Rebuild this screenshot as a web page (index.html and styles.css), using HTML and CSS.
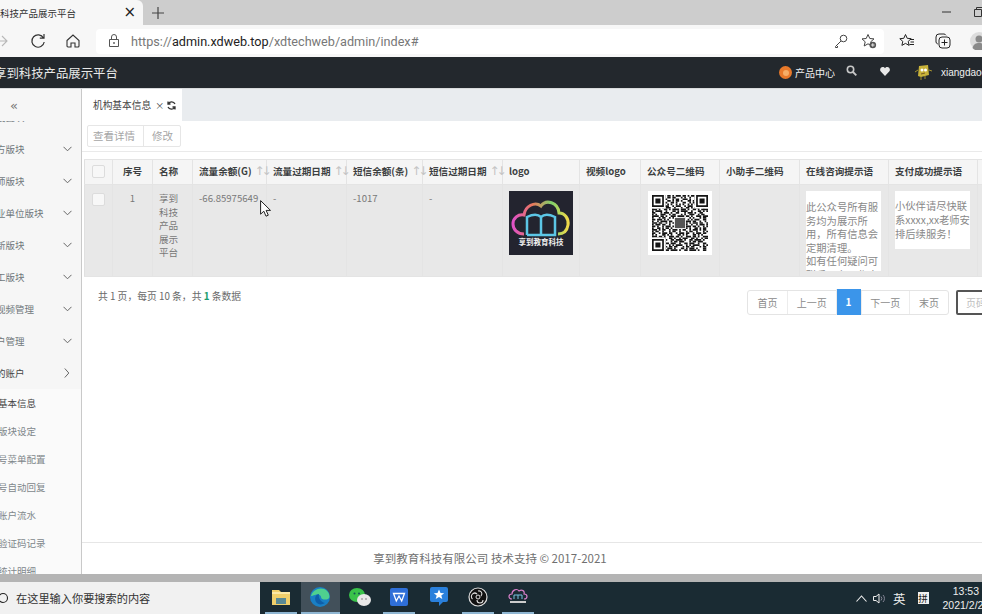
FILE: index.html
```html
<!DOCTYPE html>
<html lang="zh-CN">
<head>
<meta charset="utf-8">
<title>享到科技产品展示平台</title>
<link rel="stylesheet" href="styles.css">
</head>
<body>
<div class="tabbar">
  <div class="browser-tab">
    <span class="browser-tab-title">科技产品展示平台</span>
    <span class="browser-tab-close">×</span>
  </div>
  <svg class="new-tab" width="12" height="12" viewBox="0 0 12 12"><path d="M6 0v12M0 6h12" stroke="#444" stroke-width="1.2"/></svg>
  <div class="win-controls">
    <svg width="10" height="10" viewBox="0 0 10 10"><path d="M0 5h9" stroke="#333"/></svg>
    <svg width="10" height="10" viewBox="0 0 10 10"><path d="M.5 2.5h7v7h-7zM2.5 2.5v-2h7v7h-2" fill="none" stroke="#333"/></svg>
  </div>
</div>

<div class="addrbar">
  <div class="nav-icons">
    <svg width="14" height="14" viewBox="0 0 14 14"><path d="M0 7h11M6 2l5 5-5 5" fill="none" stroke="#b8b8b8" stroke-width="1.1"/></svg>
    <svg width="16" height="16" viewBox="0 0 16 16"><path d="M13.5 5A6.2 6.2 0 1 0 14.2 9M14 1v4.2H9.8" fill="none" stroke="#333" stroke-width="1.2"/></svg>
    <svg width="14" height="14" viewBox="0 0 14 14"><path d="M1 6.500L7 1l6 5.500V12a1 1 0 0 1-1 1H9V9H5v4H2a1 1 0 0 1-1-1z" fill="none" stroke="#333" stroke-width="1.1"/></svg>
  </div>
  <div class="omnibox">
    <svg width="12" height="14" viewBox="0 0 12 14"><path d="M1.500 5.500h9v7h-9zM3.500 5.500V3a2.500 2.500 0 0 1 5 0v2.500" fill="none" stroke="#555"/><circle cx="6" cy="9" r=".9" fill="#555"/></svg>
    <span class="url"><span class="url-dim">https://</span>admin.xdweb.top<span class="url-dim">/xdtechweb/admin/index#</span></span>
    <div class="omni-actions">
      <svg width="14" height="14" viewBox="0 0 14 14"><circle cx="9.500" cy="4.500" r="3.300" fill="none" stroke="#444"/><path d="M7 7L1.500 12.500v1h2V12" fill="none" stroke="#444"/></svg>
      <svg width="16" height="16" viewBox="0 0 16 16"><path d="M7 1.500l1.800 4 4.200.4-3.200 2.800 1 4.200L7 10.800 3.200 13l1-4.200L1 5.900l4.200-.4z" fill="none" stroke="#444"/><circle cx="11.800" cy="12" r="3.300" fill="#555"/><path d="M10 12h3.600M11.800 10.200v3.600" stroke="#fff" stroke-width=".8"/></svg>
    </div>
  </div>
  <div class="browser-actions">
    <svg width="16" height="16" viewBox="0 0 16 16"><path d="M6.500 1.500l1.700 3.800 4 .4-3 2.700.9 4-3.600-2-3.600 2 .9-4-3-2.700 4-.4z" fill="none" stroke="#222"/><path d="M11 6.500h4M11.500 9h3.500M10.500 11.500h4.500" stroke="#222"/></svg>
    <svg width="16" height="16" viewBox="0 0 16 16"><rect x="4" y="4" width="11" height="11" rx="3" fill="none" stroke="#222"/><path d="M2.800 11A2.500 2.500 0 0 1 1 9V4a3 3 0 0 1 3-3h5a2.500 2.500 0 0 1 2 1.300M9.500 6.500v6M6.500 9.500h6" fill="none" stroke="#222"/></svg>
    <svg class="profile" width="18" height="18" viewBox="0 0 18 18"><circle cx="9" cy="9" r="9" fill="#ddd"/><circle cx="9" cy="7" r="3.500" fill="#8a8a8a"/><path d="M2.500 16c1-4 3.500-5 6.500-5s5.500 1 6.500 5a9 9 0 0 1-13 0z" fill="#8a8a8a"/></svg>
  </div>
</div>

<div class="app">
  <header class="topbar">
    <div class="brand">享到科技产品展示平台</div>
    <div class="top-right">
      <span class="product-dot"><span class="product-dot-core"></span></span>
      <span class="product-link">产品中心</span>
      <svg class="top-search" width="11" height="11" viewBox="0 0 11 11"><circle cx="4.500" cy="4.500" r="3.200" fill="none" stroke="#c8c8c8" stroke-width="1.600"/><path d="M7 7l3.300 3.300" stroke="#c8c8c8" stroke-width="1.800"/></svg>
      <svg class="top-heart" width="10" height="9" viewBox="0 0 10 9"><path d="M5 9L.8 4.600C-.8 2.500.6 0 2.700 0 3.700 0 4.500.5 5 1.300 5.500.5 6.300 0 7.300 0c2.100 0 3.500 2.500 1.900 4.600z" fill="#e8e8e8"/></svg>
      <svg class="top-avatar" width="18" height="16" viewBox="0 0 18 16"><path d="M5 1l9-1 1 10-8 2-3-1z" fill="#c9b33a"/><circle cx="8" cy="5" r="1.500" fill="#fff"/><circle cx="11.500" cy="5" r="1.500" fill="#fff"/><path d="M7 9l4-1" stroke="#7a5b22"/><path d="M4 5L1 7M15 5l3 1M7 12v3M11 11v3" stroke="#a5922f"/></svg>
      <span class="username">xiangdaoedu</span>
    </div>
  </header>

  <div class="main">
    <aside class="sidebar">
      <div class="collapse">«</div>
      <nav class="menu">
        <div class="menu-item"><span class="menu-label">系统设置块</span><svg class="chev" width="9" height="6" viewBox="0 0 9 6"><path d="M.5.800l4 4 4-4" fill="none" stroke="#666"/></svg></div>
        <div class="menu-item"><span class="menu-label">校官方版块</span><svg class="chev" width="9" height="6" viewBox="0 0 9 6"><path d="M.5.800l4 4 4-4" fill="none" stroke="#666"/></svg></div>
        <div class="menu-item"><span class="menu-label">名教师版块</span><svg class="chev" width="9" height="6" viewBox="0 0 9 6"><path d="M.5.800l4 4 4-4" fill="none" stroke="#666"/></svg></div>
        <div class="menu-item"><span class="menu-label">企事业单位版块</span><svg class="chev" width="9" height="6" viewBox="0 0 9 6"><path d="M.5.800l4 4 4-4" fill="none" stroke="#666"/></svg></div>
        <div class="menu-item"><span class="menu-label">学校新版块</span><svg class="chev" width="9" height="6" viewBox="0 0 9 6"><path d="M.5.800l4 4 4-4" fill="none" stroke="#666"/></svg></div>
        <div class="menu-item"><span class="menu-label">教职工版块</span><svg class="chev" width="9" height="6" viewBox="0 0 9 6"><path d="M.5.800l4 4 4-4" fill="none" stroke="#666"/></svg></div>
        <div class="menu-item"><span class="menu-label">课程视频管理</span><svg class="chev" width="9" height="6" viewBox="0 0 9 6"><path d="M.5.800l4 4 4-4" fill="none" stroke="#666"/></svg></div>
        <div class="menu-item"><span class="menu-label">新用户管理</span><svg class="chev" width="9" height="6" viewBox="0 0 9 6"><path d="M.5.800l4 4 4-4" fill="none" stroke="#666"/></svg></div>
        <div class="menu-item menu-open"><span class="menu-label">机构的账户</span><svg class="chev" width="6" height="10" viewBox="0 0 6 10"><path d="M.8.500l4 4.500-4 4.500" fill="none" stroke="#666"/></svg></div>
        <div class="sub-item sub-active">机构基本信息</div>
        <div class="sub-item">机构版块设定</div>
        <div class="sub-item">公众号菜单配置</div>
        <div class="sub-item">公众号自动回复</div>
        <div class="sub-item">机构账户流水</div>
        <div class="sub-item">短信验证码记录</div>
        <div class="sub-item">机构统计明细</div>
      </nav>
    </aside>

    <section class="content">
      <div class="tabs">
        <div class="tab">机构基本信息<span class="tab-x">×</span>
          <svg width="9" height="9" viewBox="0 0 9 9"><path d="M8 3A3.800 3.800 0 0 0 1.300 2.600M1 6a3.800 3.800 0 0 0 6.700.4M1 .5v2.500h2.500M8 8.500V6H5.500" fill="none" stroke="#333" stroke-width="1.300"/></svg>
        </div>
      </div>

      <div class="toolbar">
        <div class="btn-group">
          <span class="btn">查看详情</span>
          <span class="btn">修改</span>
        </div>
      </div>

      <div class="table-wrap">
        <table class="data">
          <colgroup>
            <col class="c-check"><col class="c-idx"><col class="c-name"><col class="c-a"><col class="c-b"><col class="c-c"><col class="c-d"><col class="c-logo"><col class="c-vlogo"><col class="c-qr"><col class="c-help"><col class="c-msg"><col class="c-msg"><col class="c-rest">
          </colgroup>
          <thead>
            <tr>
              <th class="center"><span class="check"></span></th>
              <th class="center">序号</th>
              <th>名称</th>
              <th>流量余额(G)<span class="sort">↑↓</span></th>
              <th>流量过期日期<span class="sort">↑↓</span></th>
              <th>短信余额(条)<span class="sort">↑↓</span></th>
              <th>短信过期日期<span class="sort">↑↓</span></th>
              <th>logo</th>
              <th>视频logo</th>
              <th>公众号二维码</th>
              <th>小助手二维码</th>
              <th>在线咨询提示语</th>
              <th>支付成功提示语</th>
              <th></th>
            </tr>
          </thead>
          <tbody>
            <tr>
              <td class="center"><span class="check"></span></td>
              <td class="center">1</td>
              <td class="wrapcell">享到科技产品展示平台</td>
              <td>-66.85975649</td>
              <td>-</td>
              <td>-1017</td>
              <td>-</td>
              <td>
                <div class="logo-box">
                  <svg width="64" height="64" viewBox="0 0 64 64">
                    <defs>
                      <linearGradient id="cloud" x1="0" x2="1" y1="0" y2="0">
                        <stop offset="0" stop-color="#e052c8"/>
                        <stop offset=".35" stop-color="#e8785c"/>
                        <stop offset=".7" stop-color="#7fd06a"/>
                        <stop offset="1" stop-color="#f2d94a"/>
                      </linearGradient>
                    </defs>
                    <rect width="64" height="64" fill="#23242f"/>
                    <path d="M15 43C8 43 4 38 4 33 4 27 9 23 15 24 16 15 26 10 32 15 37 8 49 11 50 22 56 22 60 28 59 34 58 40 54 43 49 43" fill="none" stroke="url(#cloud)" stroke-width="3"/>
                    <path d="M18 44V26C24 23 29 23 32 26 35 23 40 23 46 26V44H18M32 26V44" fill="none" stroke="#5cc6e6" stroke-width="2.500"/>
                    <text x="32" y="54" class="logo-text">享到教育科技</text>
                  </svg>
                </div>
              </td>
              <td></td>
              <td>
                <div class="qr-box">
                  <svg width="56" height="56" viewBox="0 0 33 33">
                    <g fill="none" stroke="#151515" stroke-width="1">
                      <path d="M0 .5h33" stroke-dasharray="2 1 1 1 3 1"/>
                      <path d="M0 1.500h33" stroke-dasharray="1 2 3 1 1 1 2"/>
                      <path d="M0 2.500h33" stroke-dasharray="3 1 1 2 2"/>
                      <path d="M0 3.500h33" stroke-dasharray="1 1 2 1 1 3 2 1"/>
                      <path d="M0 4.500h33" stroke-dasharray="2 2 1 1 3"/>
                      <path d="M0 5.500h33" stroke-dasharray="1 1 1 1 1 2"/>
                      <path d="M0 6.500h33" stroke-dasharray="3 2 1 1"/>
                      <path d="M0 7.500h33" stroke-dasharray="1 2 2 1 1 1 3 2 1 3"/>
                      <path d="M0 8.500h33" stroke-dasharray="3 1 1 2 2 1 1 1 4 1"/>
                      <path d="M0 9.500h33" stroke-dasharray="1 1 4 2 1 3 2 1"/>
                      <path d="M0 10.500h33" stroke-dasharray="2 3 1 1 3 1 1 2"/>
                      <path d="M0 11.500h33" stroke-dasharray="1 1 1 2 3 2 1 1 2 3"/>
                      <path d="M0 12.500h33" stroke-dasharray="4 1 2 1 1 2 3 1"/>
                      <path d="M0 13.500h33" stroke-dasharray="1 3 1 1 2 2 1 1"/>
                      <path d="M0 14.500h33" stroke-dasharray="2 1 3 1 1 1 1 3 2"/>
                      <path d="M0 15.500h33" stroke-dasharray="1 2 1 1 4 1 2 2"/>
                      <path d="M0 16.500h33" stroke-dasharray="3 1 2 2 1 1 1 1"/>
                      <path d="M0 17.500h33" stroke-dasharray="1 1 3 1 2 2 1 2"/>
                      <path d="M0 18.500h33" stroke-dasharray="2 1 1 2 1 1 3 1"/>
                      <path d="M0 19.500h33" stroke-dasharray="1 2 2 1 1 1 2 1"/>
                      <path d="M0 20.500h33" stroke-dasharray="3 1 1 1 2 2 1 1"/>
                      <path d="M0 21.500h33" stroke-dasharray="1 1 2 2 1 3"/>
                      <path d="M0 22.500h33" stroke-dasharray="2 2 1 1 3 1"/>
                      <path d="M0 23.500h33" stroke-dasharray="1 1 1 3 2 1"/>
                      <path d="M0 24.500h33" stroke-dasharray="3 1 2 1 1 2"/>
                      <path d="M0 25.500h33" stroke-dasharray="1 2 1 1 3 2 2 1"/>
                      <path d="M0 26.500h33" stroke-dasharray="2 1 4 1 1 2"/>
                      <path d="M0 27.500h33" stroke-dasharray="1 1 2 1 3 3"/>
                      <path d="M0 28.500h33" stroke-dasharray="3 2 1 2 2 1"/>
                      <path d="M0 29.500h33" stroke-dasharray="1 1 1 1 4 2"/>
                      <path d="M0 30.500h33" stroke-dasharray="2 1 2 3 1 1"/>
                      <path d="M0 31.500h33" stroke-dasharray="1 3 2 1 1 1 3 1"/>
                      <path d="M0 32.500h33" stroke-dasharray="4 1 1 2 2 1"/>
                    </g>
                    <path d="M0 0h8v8H0zM25 0h8v8h-8zM0 25h8v8H0z" fill="#fff"/>
                    <path d="M.5.500h6v6h-6zM26.500.500h6v6h-6zM.5 26.500h6v6h-6z" fill="none" stroke="#151515"/>
                    <path d="M2 2h3v3H2zM28 2h3v3h-3zM2 28h3v3H2z" fill="#151515"/>
                    <rect x="13" y="13" width="7" height="7" fill="#fff"/>
                    <rect x="13.500" y="13.500" width="6" height="6" fill="#555"/>
                  </svg>
                </div>
              </td>
              <td></td>
              <td>
                <div class="msg-box msg-tall">此公众号所有服务均为展示所用，所有信息会定期清理。<br>如有任何疑问可联系平台工作人员</div>
              </td>
              <td>
                <div class="msg-box">小伙伴请尽快联系xxxx,xx老师安排后续服务！</div>
              </td>
              <td></td>
            </tr>
          </tbody>
        </table>
      </div>

      <div class="pager-row">
        <div class="pager-info">共 1 页，每页 10 条，共 <b>1</b> 条数据</div>
        <div class="pager">
          <div class="pages">
            <span class="page page-end">首页</span>
            <span class="page page-mid">上一页</span>
            <span class="page page-on">1</span>
            <span class="page page-mid">下一页</span>
            <span class="page page-end">末页</span>
          </div>
          <span class="page-input">页码</span>
        </div>
      </div>

      <footer class="foot">享到教育科技有限公司 技术支持 © 2017-2021</footer>
    </section>
  </div>
</div>

<div class="win-strip"></div>

<div class="taskbar">
  <div class="task-search">
    <svg width="12" height="12" viewBox="0 0 12 12"><circle cx="3" cy="6" r="4.500" fill="none" stroke="#222" stroke-width="1.100"/></svg>
    <span>在这里输入你要搜索的内容</span>
  </div>
  <div class="task-apps">
    <div class="app-cell app-run">
      <svg width="18" height="16" viewBox="0 0 18 16"><path d="M0 1h7l2 2h9v13H0z" fill="#f0cf6b"/><rect x="4" y="9" width="10" height="6" fill="#5a8a95"/><rect y="3" width="18" height="2" fill="#fbe8a6"/></svg>
    </div>
    <div class="app-cell app-active">
      <svg width="20" height="20" viewBox="0 0 20 20"><circle cx="10" cy="10" r="10" fill="#1a7fc4"/><path d="M1 9C3 2 12-1 17 4c3 3 3 7 1 8-2 1-7 1-7-2 0-2-3-3-6-2-2 .5-3 1-4 1z" fill="#4fd08f"/><path d="M6 15c-2-4 0-8 3-8-1 3 1 8 6 9-3 2-7 2-9-1z" fill="#0f5ea8"/></svg>
    </div>
    <div class="app-cell">
      <svg width="22" height="18" viewBox="0 0 22 18"><ellipse cx="8" cy="7" rx="8" ry="7" fill="#39c24a"/><ellipse cx="15" cy="12" rx="7" ry="6" fill="#e8e8e8"/><circle cx="5.500" cy="5.500" r="1" fill="#155"/><circle cx="10" cy="5.500" r="1" fill="#155"/><circle cx="13" cy="11" r=".8" fill="#777"/><circle cx="17" cy="11" r=".8" fill="#777"/></svg>
    </div>
    <div class="app-cell app-run">
      <svg width="18" height="18" viewBox="0 0 18 18"><rect width="18" height="18" rx="2" fill="#2f6fd8"/><path d="M3.500 5.500h11l-2.800 7.500L9 8l-2.700 5z" fill="none" stroke="#fff" stroke-width="1.300"/></svg>
    </div>
    <div class="app-cell">
      <svg width="18" height="20" viewBox="0 0 18 20"><path d="M2 0h14a2 2 0 0 1 2 2v11a2 2 0 0 1-2 2h-3l-4 4v-4H2a2 2 0 0 1-2-2V2a2 2 0 0 1 2-2z" fill="#2a80dc"/><path d="M9 2.500l1.500 3.500 3.700.2-2.900 2.300 1 3.500-3.300-2-3.300 2 1-3.500L3.800 6.200 7.500 6z" fill="#fff"/></svg>
    </div>
    <div class="app-cell app-run">
      <svg width="20" height="20" viewBox="0 0 20 20"><circle cx="10" cy="10" r="9" fill="#111" stroke="#ddd" stroke-width="1.200"/><circle cx="10" cy="10" r="2" fill="none" stroke="#ddd"/><path d="M10 4a3 3 0 0 1 3 5M4.500 12a3 3 0 0 1 4.500-5M15 13a3 3 0 0 1-6 0" fill="none" stroke="#ddd" stroke-width="1.100"/></svg>
    </div>
    <div class="app-cell app-run">
      <svg width="20" height="18" viewBox="0 0 20 18"><path d="M4 11C0 11 0 6 4 6c0-4 5-6 7-3 3-2 6 0 5 3 4 0 4 5 0 5" fill="none" stroke="#d67fc8" stroke-width="1.200"/><path d="M6 11V7h8v4M10 7v4" fill="none" stroke="#76c3e0"/><path d="M2 14h16" stroke="#ccc" stroke-width="2"/></svg>
    </div>
  </div>
  <div class="tray">
    <svg width="11" height="7" viewBox="0 0 11 7"><path d="M.5 6.500l5-5.500 5 5.500" fill="none" stroke="#eee" stroke-width="1.100"/></svg>
    <svg width="13" height="11" viewBox="0 0 13 11"><path d="M.5 3.500H3L6 1v9L3 7.500H.5z" fill="none" stroke="#eee"/><path d="M8 3.500a3 3 0 0 1 0 4M10 2a5 5 0 0 1 0 7" fill="none" stroke="#889"/></svg>
    <span class="tray-lang">英</span>
    <span class="tray-ime">拼</span>
    <div class="clock"><span>13:53</span><span>2021/2/22</span></div>
  </div>
</div>

<svg class="cursor" width="11" height="17" viewBox="0 0 11 17"><path d="M.6.600v13.600l3.200-3 2.200 5 2.300-1-2.200-4.800h4.400z" fill="#fff" stroke="#222"/></svg>
</body>
</html>
```

FILE: styles.css
```css
* { box-sizing: border-box; }
html, body { margin: 0; height: 100%; }
body {
  width: 982px;
  height: 614px;
  overflow: hidden;
  display: flex;
  flex-direction: column;
  position: relative;
  font-family: "Noto Sans CJK SC", "Liberation Sans", sans-serif;
  color: #676a6c;
  background: #fff;
}

/* browser chrome */
.tabbar {
  height: 25px;
  flex: none;
  background: #cdcdcd;
  display: flex;
  align-items: center;
}
.browser-tab {
  width: 143px;
  height: 25px;
  background: #f7f7f7;
  border-radius: 0 6px 0 0;
  display: flex;
  align-items: center;
  justify-content: space-between;
  padding-right: 7px;
  color: #333;
}
.browser-tab-title { font-size: 9.500px; white-space: nowrap; }
.browser-tab-close { font-size: 15px; line-height: 1; color: #222; font-family: "DejaVu Sans", sans-serif; }
.new-tab { margin-left: 9px; }
.win-controls {
  margin-left: auto;
  display: flex;
  gap: 22px;
  margin-right: -1px;
  width: 41px;
  overflow: hidden;
  transform: translateY(-1px);
}
.win-controls svg { flex: none; }
.addrbar {
  height: 32px;
  flex: none;
  background: #f7f7f7;
  display: flex;
  align-items: center;
}
.nav-icons {
  display: flex;
  align-items: center;
  gap: 20px;
  margin-left: -4px;
  padding-right: 14px;
  flex: none;
  width: 100px;
}
.omnibox {
  width: 788px;
  height: 25px;
  background: #fff;
  border-radius: 4px;
  display: flex;
  align-items: center;
  padding-left: 12px;
  flex: none;
}
.url {
  margin-left: 11px;
  font-family: Roboto, sans-serif;
  font-size: 12.650px;
  color: #222;
  white-space: nowrap;
}
.url-dim { color: #777; }
.omni-actions {
  margin-left: auto;
  display: flex;
  align-items: center;
  gap: 13px;
  padding-right: 7px;
}
.browser-actions {
  display: flex;
  align-items: center;
  gap: 20px;
  margin-left: 15px;
  flex: none;
}
.profile { margin-left: -1px; }

/* app */
.app {
  flex: 1;
  min-height: 0;
  display: flex;
  flex-direction: column;
}
.topbar {
  height: 32px;
  flex: none;
  background: #23282d;
  border-bottom: 1px solid #d8dadc;
  display: flex;
  align-items: center;
  overflow: hidden;
}
.brand {
  margin-left: -6px;
  font-size: 12.400px;
  color: #e8e8e8;
  white-space: nowrap;
}
.top-right {
  margin-left: auto;
  display: flex;
  align-items: center;
  color: #f0f0f0;
  font-size: 10px;
  width: 203px;
  flex: none;
}
.product-dot {
  width: 13px;
  height: 13px;
  border-radius: 50%;
  background: #e8792a;
  flex: none;
  display: flex;
  align-items: center;
  justify-content: center;
}
.product-dot-core { width: 6px; height: 6px; border-radius: 50%; background: #f6ad66; }
.product-link { margin-left: 3px; flex: none; }
.top-search { margin-left: 11px; margin-top: -4px; flex: none; }
.top-heart { margin-left: 23px; margin-top: -3px; flex: none; }
.top-avatar { margin-left: 24px; flex: none; }
.username { margin-left: 9px; font-family: "Liberation Sans", sans-serif; white-space: nowrap; }

.main {
  flex: 1;
  min-height: 0;
  display: flex;
}
.sidebar {
  width: 82px;
  flex: none;
  background: #f6f6f6;
  border-right: 1px solid #c9c9c9;
  display: flex;
  flex-direction: column;
  overflow: hidden;
}
.collapse {
  height: 32px;
  flex: none;
  padding-left: 10px;
  line-height: 34px;
  font-size: 13px;
  color: #777;
  font-family: "DejaVu Sans", sans-serif;
}
.menu {
  flex: 1;
  min-height: 0;
  overflow: hidden;
  font-size: 9.500px;
  color: #70787c;
  white-space: nowrap;
}
.menu-item {
  height: 32px;
  display: flex;
  align-items: center;
  justify-content: space-between;
  padding-right: 9px;
}
.menu-item:first-child { margin-top: -20px; }
.menu-label { margin-left: -23px; }
.menu-open .menu-label { color: #444; }
.menu-open .chev { margin-right: 2px; }
.sub-item {
  height: 28px;
  line-height: 28px;
  margin-left: -21px;
  background: #fafafa;
  color: #80878b;
}
.sub-active { color: #444; }

.content {
  flex: 1;
  min-width: 0;
  display: flex;
  flex-direction: column;
}
.tabs {
  height: 32px;
  flex: none;
  background: #e9ecef;
}
.tab {
  width: 100px;
  height: 32px;
  background: #fff;
  font-size: 9.700px;
  color: #444;
  display: flex;
  align-items: center;
  padding-left: 11px;
  white-space: nowrap;
}
.tab-x { margin: 0 3px 0 4px; font-size: 9px; }
.toolbar {
  height: 31px;
  flex: none;
  display: flex;
  align-items: flex-start;
  padding: 4px 0 0 5px;
  margin-bottom: 7px;
  border-bottom: 1px solid #eaeaea;
}
.btn-group {
  display: flex;
  height: 22px;
  border: 1px solid #e6e6e6;
  border-radius: 2px;
}
.btn {
  font-size: 10.500px;
  color: #a5a5a5;
  line-height: 20px;
  padding: 0 8px 0 5px;
}
.btn + .btn { border-left: 1px solid #e6e6e6; padding: 0 7px 0 8px; }

.table-wrap {
  flex: none;
  margin-left: 2px;
  overflow: hidden;
}
.data {
  border-collapse: collapse;
  table-layout: fixed;
  width: 929px;
  font-size: 9.600px;
}
.c-check { width: 28px; }
.c-idx { width: 40px; }
.c-name { width: 40px; }
.c-a { width: 74px; }
.c-b { width: 80px; }
.c-c { width: 76px; }
.c-d { width: 80px; }
.c-logo { width: 77px; }
.c-vlogo { width: 61px; }
.c-qr { width: 79px; }
.c-help { width: 80px; }
.c-msg { width: 89px; }
.c-rest { width: 36px; }
.data th, .data td {
  border: 1px solid #e4e4e4;
  border-left-color: #e0e0e0;
  padding: 7px 6px 5px;
  text-align: left;
  vertical-align: top;
}
.data th {
  height: 25px;
  padding: 0 6px 2px;
  vertical-align: middle;
  background: #f5f5f5;
  color: #3c3f41;
  font-weight: 700;
  white-space: nowrap;
}
.data td {
  height: 92px;
  background: #e8e8e8;
  line-height: 13.500px;
  color: #787878;
}
.data .center { text-align: center; }
.sort {
  font-family: "DejaVu Sans", sans-serif;
  font-weight: 400;
  color: #c4c4c4;
  letter-spacing: -3px;
  margin-left: 3px;
  font-size: 12px;
}
.check {
  display: inline-block;
  width: 13px;
  height: 13px;
  background: #f7f7f7;
  border: 1px solid #dcdcdc;
  border-radius: 2px;
  vertical-align: middle;
}
.wrapcell { word-break: break-all; }
.logo-box, .qr-box { width: 64px; height: 64px; margin-top: -1px; }
.logo-box svg { display: block; }
.qr-box {
  background: #fff;
  display: flex;
  align-items: center;
  justify-content: center;
  margin-left: 1px;
}
.logo-text {
  font-size: 7.500px;
  font-weight: 700;
  fill: #f0f0f0;
  text-anchor: middle;
}
.msg-box {
  background: #fff;
  width: 75px;
  margin-top: -1px;
  padding: 8px 0;
  font-size: 10.300px;
  line-height: 14px;
  color: #888;
  word-break: break-all;
  overflow: hidden;
}
.msg-tall { height: 80px; padding-top: 9px; padding-bottom: 0; line-height: 13.500px; }

.pager-row {
  flex: none;
  display: flex;
  justify-content: space-between;
  align-items: flex-start;
  padding: 13px 0 0 16px;
  white-space: nowrap;
}
.pager-info { font-size: 9.800px; color: #6a6a6a; margin-top: -1px; }
.pager-info b { color: #1a9c6d; }
.pager {
  display: flex;
  align-items: flex-start;
  flex: none;
  margin-right: -34px;
}
.pages {
  display: flex;
  height: 25px;
  border: 1px solid #e4e4e4;
  border-radius: 3px;
}
.page {
  font-size: 10px;
  line-height: 23px;
  text-align: center;
  color: #8a8a8a;
  border-left: 1px solid #ececec;
}
.page:first-child { border-left: 0; }
.page-end { width: 39px; }
.page-mid { width: 48.500px; }
.page-on {
  width: 25px;
  background: #3b95ea;
  color: #fff;
  font-weight: 700;
  margin: -2px 0 -1px;
  line-height: 26px;
}
.page-input {
  width: 60px;
  height: 25px;
  margin-left: 7px;
  border: 2px solid #555;
  border-radius: 2px;
  font-size: 10px;
  line-height: 21px;
  padding-left: 8px;
  color: #c0c0c0;
}
.foot {
  margin-top: auto;
  height: 32px;
  flex: none;
  padding-right: 84px;
  border-top: 1px solid #e6e6e6;
  text-align: center;
  line-height: 31px;
  font-size: 11.500px;
  color: #6f6f6f;
}

/* windows */
.win-strip {
  height: 8px;
  flex: none;
  background: #b4b4b4;
}
.taskbar {
  height: 32px;
  flex: none;
  background: #1a2b33;
  display: flex;
  align-items: center;
}
.task-search {
  width: 260px;
  height: 32px;
  flex: none;
  background: #f1f1f1;
  display: flex;
  align-items: center;
  gap: 4px;
  font-size: 11.200px;
  color: #333;
  white-space: nowrap;
}
.task-apps {
  display: flex;
  height: 32px;
  margin-left: 1px;
}
.app-cell {
  width: 39.500px;
  height: 32px;
  padding-bottom: 2px;
  display: flex;
  align-items: center;
  justify-content: center;
}
.app-run { background: linear-gradient(#8fb6d2, #8fb6d2) center bottom / 32px 2px no-repeat; }
.app-active { background: linear-gradient(#8fb6d2, #8fb6d2) center bottom / 100% 2px no-repeat, #42505a; }
.tray {
  margin-left: auto;
  display: flex;
  align-items: center;
  color: #eee;
  width: 126px;
  flex: none;
  gap: 6px;
}
.tray svg { flex: none; }
.tray-lang { font-size: 12.500px; margin-left: 1px; flex: none; }
.tray-ime {
  background: #f0f0f0;
  color: #222;
  font-size: 9.500px;
  line-height: 12px;
  width: 11px;
  margin-left: 6px;
  text-align: center;
  flex: none;
}
.clock {
  display: flex;
  flex-direction: column;
  align-items: center;
  font-family: "Liberation Sans", sans-serif;
  font-size: 10.500px;
  line-height: 14px;
  margin-left: 8px;
  flex: none;
}

/* floats over the table */
.cursor {
  position: absolute;
  left: 260px;
  top: 200px;
}
```
